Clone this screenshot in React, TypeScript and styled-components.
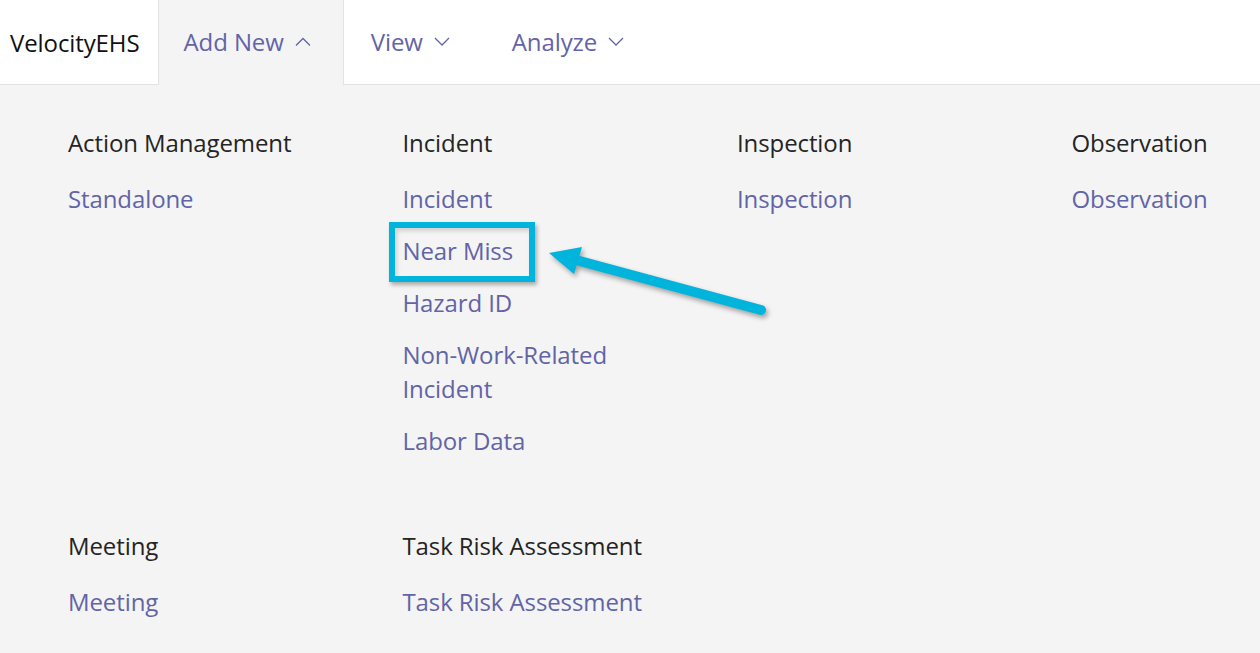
import React from 'react';
import styled, { createGlobalStyle } from 'styled-components';

const GlobalStyle = createGlobalStyle`
  html, body {
    margin: 0;
    padding: 0;
    background: #f4f4f4;
  }
  body {
    font-family: "Open Sans", "Liberation Sans", sans-serif;
  }
`;

const LINK = '#6264a7';
const TEXT = '#242424';
const BORDER = '#e3e3e3';

interface Section {
  title: string;
  links: string[];
}

const rows: Section[][] = [
  [
    { title: 'Action Management', links: ['Standalone'] },
    { title: 'Incident', links: ['Incident', 'Near Miss', 'Hazard ID', 'Non-Work-Related Incident', 'Labor Data'] },
    { title: 'Inspection', links: ['Inspection'] },
    { title: 'Observation', links: ['Observation'] }
  ],
  [
    { title: 'Meeting', links: ['Meeting'] },
    { title: 'Task Risk Assessment', links: ['Task Risk Assessment'] }
  ]
];

const Page = styled.div`
  width: 1260px;
  height: 653px;
  overflow: hidden;
  background: #f4f4f4;
`;

const NavBar = styled.nav`
  display: flex;
  align-items: stretch;
  height: 84px;
  background: #ffffff;
  border-bottom: 1px solid ${BORDER};
  font-size: 24px;
  letter-spacing: -0.1px;
`;

const Brand = styled.div`
  display: flex;
  align-items: center;
  padding: 0 18px 0 10px;
  color: #111111;
`;

const NavItem = styled.div<{ $active?: boolean }>`
  display: flex;
  align-items: center;
  gap: 11px;
  padding: ${({ $active }) => ($active ? '0 32px 2px 25px' : '0 34px 2px 26px')};
  color: ${LINK};
  background: ${({ $active }) => ($active ? '#f4f4f4' : 'transparent')};
  border-left: 1px solid ${({ $active }) => ($active ? BORDER : 'transparent')};
  border-right: 1px solid ${({ $active }) => ($active ? BORDER : 'transparent')};
  margin-bottom: ${({ $active }) => ($active ? '-1px' : '0')};
`;

const Chevron = ({ up }: { up?: boolean }) => (
  <svg width="16" height="9" viewBox="0 0 16 9" fill="none">
    <polyline
      points={up ? '1,8.5 8,1.5 15,8.5' : '1,1 8,8 15,1'}
      stroke={LINK}
      strokeWidth="1.3"
    />
  </svg>
);

const Panel = styled.div`
  display: flex;
  flex-direction: column;
  gap: 53px;
  padding: 41px 0 0 68px;
  font-size: 24px;
  letter-spacing: -0.1px;
`;

const Row = styled.div`
  display: grid;
  grid-template-columns: repeat(3, 334.5px) auto;
`;

const Column = styled.div`
  display: flex;
  flex-direction: column;
  align-items: flex-start;
`;

const Heading = styled.div`
  color: ${TEXT};
  line-height: 34px;
  margin-bottom: 22px;
  white-space: nowrap;
`;

const LinkItem = styled.a<{ $highlight?: boolean }>`
  position: relative;
  display: block;
  max-width: 240px;
  color: ${LINK};
  text-decoration: none;
  line-height: 34px;
  margin-bottom: 18px;
  cursor: pointer;

  ${({ $highlight }) =>
    $highlight &&
    `
    &::after {
      content: '';
      position: absolute;
      left: -14px;
      top: -12px;
      width: 146px;
      height: 60px;
      box-sizing: border-box;
      border: 6px solid #00b4dc;
      box-shadow: 2px 3px 4px rgba(0, 0, 0, 0.3), inset 2px 3px 4px rgba(0, 0, 0, 0.15);
    }
  `}
`;

const ArrowSvg = styled.svg`
  position: absolute;
  left: 140px;
  top: 8px;
  overflow: visible;
  filter: drop-shadow(2px 3px 2.5px rgba(0, 0, 0, 0.35));
  pointer-events: none;
`;

const Arrow = () => (
  <ArrowSvg width="230" height="80" viewBox="0 0 230 80">
    <line x1="33" y1="18" x2="218" y2="68" stroke="#00b4dc" strokeWidth="10" strokeLinecap="round" />
    <polygon points="6,11 39,5 31,32" fill="#00b4dc" />
  </ArrowSvg>
);

export default function App() {
  return (
    <Page>
      <GlobalStyle />
      <NavBar>
        <Brand>VelocityEHS</Brand>
        <NavItem $active>
          Add New <Chevron up />
        </NavItem>
        <NavItem>
          View <Chevron />
        </NavItem>
        <NavItem>
          Analyze <Chevron />
        </NavItem>
      </NavBar>
      <Panel>
        {rows.map((row, i) => (
          <Row key={i}>
            {row.map((section) => (
              <Column key={section.title}>
                <Heading>{section.title}</Heading>
                {section.links.map((link) => (
                  <LinkItem key={link} $highlight={link === 'Near Miss'}>
                    {link}
                    {link === 'Near Miss' && <Arrow />}
                  </LinkItem>
                ))}
              </Column>
            ))}
          </Row>
        ))}
      </Panel>
    </Page>
  );
}
